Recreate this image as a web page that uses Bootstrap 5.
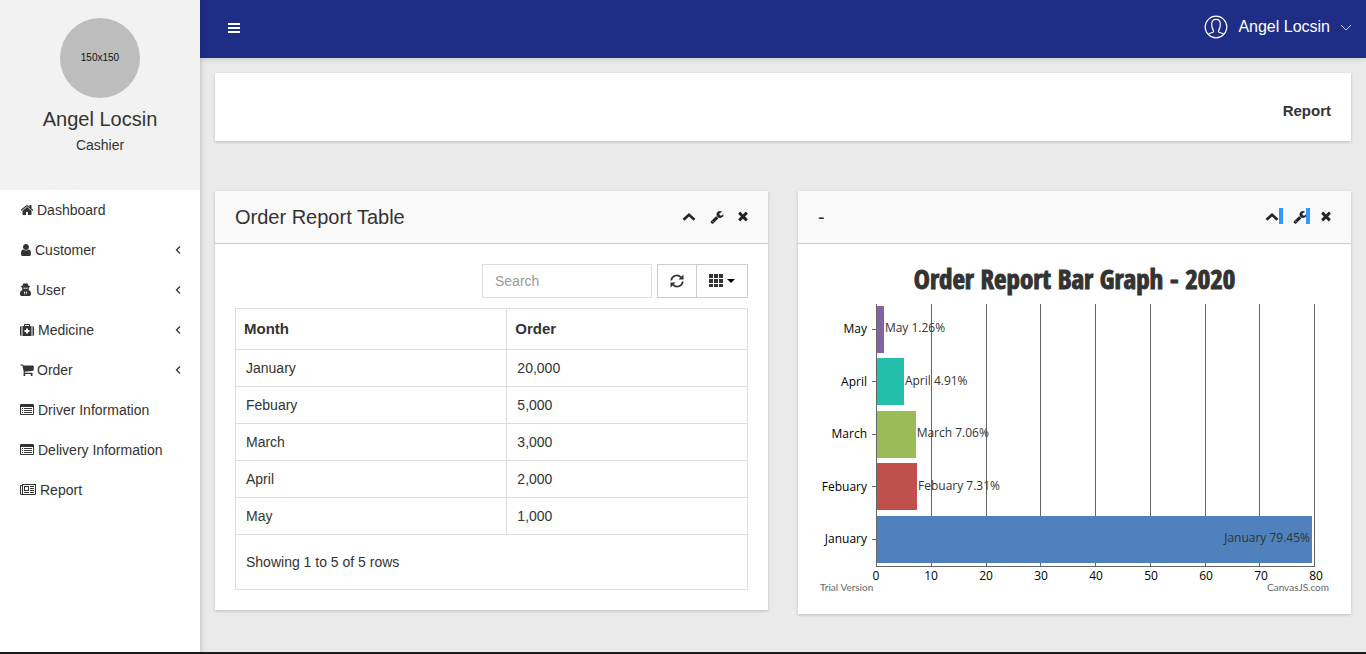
<!DOCTYPE html>
<html lang="en">
<head>
<meta charset="utf-8">
<meta name="viewport" content="width=device-width, initial-scale=1">
<title>Report</title>
<link href="https://cdn.jsdelivr.net/npm/bootstrap@5.3.0/dist/css/bootstrap.min.css" rel="stylesheet">
<style>
body { font-family: "Liberation Sans", Arial, sans-serif; font-size: 14px; line-height: 20px; color: #333; background: #eaeaea; }
a, a:hover { color: #333; text-decoration: none; }
h1, h2, h3 { margin: 0; font-weight: 400; font-size: 20px; line-height: 24px; }
.fa-ico { height: 14px; fill: currentColor; display: block; }
.shell { min-height: 100vh; border-bottom: 2px solid #1c1c1c; }
.side { width: 200px; background: #fff; box-shadow: 0 0 6px rgba(0,0,0,.25); z-index: 1; }
.profile { background: #f2f2f2; padding: 18px 0 35px; }
.avatar { width: 80px; height: 80px; background: #bdbdbd; color: #111; font-size: 10px; margin-bottom: 9px; }
.side-link { height: 40px; padding: 0 19px 0 20px; gap: 3px; }
.topbar { height: 58px; background: #1e2d85; color: #fff; padding: 0 14px 2px 28px; box-shadow: 0 1px 6px rgba(0,0,0,.15); }
.user-btn { font-size: 16px; line-height: 20px; gap: 10px; padding: 0 0 2px; }
.content { padding: 15px 15px 38px; }
.panel { background: #fff; box-shadow: 0 1px 3px rgba(0,0,0,.2); }
.crumbs { height: 68px; padding: 8px 20px 0; font-size: 15px; margin-bottom: 50px; }
.panel-top { height: 53px; background: #f9f9f9; border-bottom: 1px solid #ccc; padding: 0 20px; }
.tools { gap: 14px; }
.marked::after { content: ""; position: absolute; left: 100%; top: -2px; width: 4px; height: 16px; background: #3399ff; }
.marked + .marked::after { left: calc(100% - 1px); }
.panel-pad { padding: 20px; }
.search { width: 170px; height: 34px; border-radius: 0; border-color: #ddd; font-size: 14px; padding: 6px 12px; margin-right: 5px; }
.search::placeholder { color: #999; }
.tool-btn { height: 34px; border: 1px solid #ccc; border-radius: 0; padding: 0 12px; color: #333; background: #fff; }
.orders { --bs-table-bg: #fff; border-color: #ddd; color: #333; margin: 10px 0 0; }
.orders th { font-size: 15px; padding: 10px 8px; }
.orders td { padding: 8px 10px; }
.orders .foot td { padding: 17px 10px; }
.orders th:first-child { width: 53%; }
.chart { padding: 18px 20px 22px; font: 12px/16px "Trebuchet MS", "Open Sans", sans-serif; color: #000; }
.chart-title { font: 700 27px/34px Impact, "Open Sans Condensed", "Liberation Sans Narrow", sans-serif; color: #333; -webkit-text-stroke: 1px #333; }
.plot { margin: 8px 16px 0 58px; height: 263px; border-left: 1px solid #666; border-bottom: 1px solid #666; }
.grid-line { border-right: 1px solid #666; }
.chart-row { height: 52px; padding-bottom: 2px; }
.cat { position: absolute; right: calc(100% + 10px); }
.tick { position: absolute; right: 100%; width: 5px; height: 1px; background: #666; }
.bar { height: 47px; }
.val { color: #333; padding: 0 2px 2px 1px; white-space: nowrap; }
.scale { margin: 1px 0 0 48px; padding-right: 5px; }
.scale span { width: 20px; text-align: center; }
.credit { font: 10px/10px Lato, sans-serif; color: #666; }
.credits { padding: 0 2px; margin-top: -2px; }
</style>
</head>
<body>
<svg class="d-none" aria-hidden="true">
<symbol id="up" viewBox="0 0 14 14"><path d="M1.500 9.800 7 4.800l5.500 5" fill="none" stroke="currentColor" stroke-width="2.700"/></symbol>
<symbol id="wrench" viewBox="0 0 1792 1792"><path d="M448 1472q0-26-19-45t-45-19-45 19-19 45 19 45 45 19 45-19 19-45zm644-420l-682 682q-37 37-90 37-52 0-91-37l-106-108q-38-36-38-90 0-53 38-91l681-681q39 98 114.500 173.500t173.500 114.500zm634-435q0 39-23 106-47 134-164.500 217.500t-258.500 83.500q-185 0-316.500-131.500t-131.500-316.500 131.500-316.500 316.500-131.500q58 0 121.500 16.500t107.500 46.500q16 11 16 28t-16 28l-293 169v224l193 107q5-3 79-48.500t135.500-81 70.500-35.500q15 0 23.500 10t8.500 25z"/></symbol>
<symbol id="times" viewBox="302 128 1188 1792"><path d="M1490 1322q0 40-28 68l-136 136q-28 28-68 28t-68-28l-294-294-294 294q-28 28-68 28t-68-28l-136-136q-28-28-28-68t28-68l294-294-294-294q-28-28-28-68t28-68l136-136q28-28 68-28t68 28l294 294 294-294q28-28 68-28t68 28l136 136q28 28 28 68t-28 68l-294 294 294 294q28 28 28 68z"/></symbol>
<symbol id="left" viewBox="0 0 6 14"><path d="M5 3.500 1.500 7 5 10.500" fill="none" stroke="currentColor" stroke-width="1.300"/></symbol>
<symbol id="list" viewBox="0 0 14 14" preserveAspectRatio="xMinYMid"><path fill-rule="evenodd" d="M1.200 1h11.600q1.200 0 1.200 1.200v8.600q0 1.200-1.200 1.200H1.200Q0 12 0 10.800V2.200Q0 1 1.200 1zM1 4v7h12V4zM2 5h1v1H2zm2 0h8v1H4zM2 7h1v1H2zm2 0h8v1H4zM2 9h1v1H2zm2 0h8v1H4z"/></symbol>
</svg>
<div class="shell d-flex">
  <aside class="side flex-shrink-0 position-relative">
    <div class="profile text-center">
      <div class="avatar rounded-circle mx-auto d-flex align-items-center justify-content-center">150x150</div>
      <h1>Angel Locsin</h1>
      <div class="mt-1">Cashier</div>
    </div>
    <nav>
      <a class="side-link d-flex align-items-center" href="#"><svg class="fa-ico" width="14" viewBox="50 0 1690 1792"><path d="M1472 992v480q0 26-19 45t-45 19h-384v-384h-256v384h-384q-26 0-45-19t-19-45v-480q0-1 .5-3t.5-3l575-474 575 474q1 2 1 6zm223-69l-62 74q-8 9-21 11h-3q-13 0-21-7l-692-577-692 577q-12 8-24 7-13-2-21-11l-62-74q-8-10-7-23.500t11-21.500l719-599q32-26 76-26t76 26l244 204v-195q0-14 9-23t23-9h192q14 0 23 9t9 23v408l219 182q10 8 11 21.500t-7 23.500z"/></svg>Dashboard</a>
      <a class="side-link d-flex align-items-center" href="#"><svg class="fa-ico" width="12" viewBox="200 0 1400 1792"><path d="M1536 1399q0 109-62.500 187t-150.500 78h-854q-88 0-150.500-78t-62.500-187q0-85 8.500-160.500t31.500-152 58.500-131 94-89 134.500-34.500q131 128 313 128t313-128q76 0 134.500 34.500t94 89 58.500 131 31.500 152 8.500 160.500zm-256-887q0 159-112.500 271.500t-271.500 112.500-271.500-112.500-112.500-271.500 112.500-271.500 271.500-112.500 271.500 112.500 112.500 271.500z"/></svg>Customer<svg class="fa-ico ms-auto" width="6"><use href="#left"/></svg></a>
      <a class="side-link d-flex align-items-center" href="#"><svg class="fa-ico" width="13" viewBox="0 0 13 14" preserveAspectRatio="xMinYMid"><path fill-rule="evenodd" d="M2.500 2.700 3.200.8Q3.700 0 4.700.4q.8.300 1.600 0Q7.300 0 7.800.8l.7 1.900q1.700.2 1.700.8 0 .5-1.300.9.200 1.600-.4 2.500Q11 7.300 11 11.300q0 1.700-1.700 1.700H1.700Q0 13 0 11.300 0 7.300 2.500 6.900 1.900 6 2.100 4.400.8 4 .8 3.500q0-.6 1.700-.8zM3.200 4.800l.5 1h1.300l.5-.8.5.8h1.300l.5-1zM3.800 8l.9 4 .5-2.800zm3.400 0L5.800 9.200l.5 2.800z"/></svg>User<svg class="fa-ico ms-auto" width="6"><use href="#left"/></svg></a>
      <a class="side-link d-flex align-items-center" href="#"><svg class="fa-ico" width="15" viewBox="0 0 14 14" preserveAspectRatio="xMinYMid"><path fill-rule="evenodd" d="M1.500 3v10Q0 13 0 11.500v-7Q0 3 1.500 3zm11 0Q14 3 14 4.500v7q0 1.500-1.500 1.500zM2.500 3H4V1.800Q4 1 4.800 1h4.400q.8 0 .8.800V3h1.500v10h-9zM5 2v1h4V2zM6 5.500V7H4.500v2H6v1.500h2V9h1.500V7H8V5.500z"/></svg>Medicine<svg class="fa-ico ms-auto" width="6"><use href="#left"/></svg></a>
      <a class="side-link d-flex align-items-center" href="#"><svg class="fa-ico" width="14" viewBox="32 64 1728 1728"><path d="M704 1536q0 52-38 90t-90 38-90-38-38-90 38-90 90-38 90 38 38 90zm896 0q0 52-38 90t-90 38-90-38-38-90 38-90 90-38 90 38 38 90zm128-1088v512q0 24-16.500 42.500t-40.500 21.500l-1044 122q13 60 13 70 0 16-24 64h920q26 0 45 19t19 45-19 45-45 19h-1024q-26 0-45-19t-19-45q0-11 8-31.500t16-36 21.500-40 15.500-29.500l-177-823h-204q-26 0-45-19t-19-45 19-45 45-19h256q16 0 28.500 6.500t19.500 15.500 13 24.500 8 26 5.500 29.500 4.500 26h1201q26 0 45 19t19 45z"/></svg>Order<svg class="fa-ico ms-auto" width="6"><use href="#left"/></svg></a>
      <a class="side-link d-flex align-items-center" href="#"><svg class="fa-ico" width="15"><use href="#list"/></svg>Driver Information</a>
      <a class="side-link d-flex align-items-center" href="#"><svg class="fa-ico" width="15"><use href="#list"/></svg>Delivery Information</a>
      <a class="side-link d-flex align-items-center" href="#"><svg class="fa-ico" width="17" viewBox="0 0 16 14" preserveAspectRatio="xMinYMid"><path fill-rule="evenodd" d="M2 1h14v9.800q0 1.200-1.200 1.200H1.500Q0 12 0 10.500V2h2zM3 2v9h11.500q.5 0 .5-.5V2zM1 3v7.500q0 .5.500.5T2 10.500V3zM4 3h5v5H4zm1 1v3h3V4zm5-1h4v1h-4zm0 2h4v1h-4zM4 9h5v1H4zm6-2h4v1h-4zm0 2h4v1h-4z"/></svg>Report</a>
    </nav>
  </aside>
  <div class="flex-grow-1">
    <header class="topbar d-flex align-items-center justify-content-between">
      <button class="btn p-0 border-0 text-white" aria-label="Toggle menu"><svg class="fa-ico" width="12" viewBox="0 0 12 14"><path d="M0 2h12v2H0zm0 4h12v2H0zm0 4h12v2H0z"/></svg></button>
      <button class="user-btn btn border-0 text-white d-flex align-items-center">
        <svg width="24" height="24" viewBox="0 0 24 24" fill="none" stroke="#fff" stroke-width="1.200"><circle cx="12" cy="12" r="10.800"/><path d="M4 19.200q3-1.200 5-1.900.900-.4.400-1.700Q7.700 13 7.700 9q0-4.600 4.300-4.600T16.300 9q0 4-1.700 6.600-.5 1.300.4 1.700 2 .7 5 1.900"/></svg>
        <span>Angel Locsin</span>
        <svg width="12" height="12" viewBox="0 0 12 12" fill="none" stroke="#cdd3f2"><path d="M1 4l5 5 5-5"/></svg>
      </button>
    </header>
    <main class="content">
      <div class="panel crumbs d-flex align-items-center justify-content-end fw-bold">Report</div>
      <div class="row align-items-start" style="--bs-gutter-x:30px">
        <section class="col-6">
          <div class="panel">
            <div class="panel-top d-flex align-items-center justify-content-between">
              <h2>Order Report Table</h2>
              <div class="tools d-flex">
                <button class="btn p-0 border-0" aria-label="Collapse"><svg class="fa-ico" width="14"><use href="#up"/></svg></button>
                <button class="btn p-0 border-0" aria-label="Settings"><svg class="fa-ico" width="14"><use href="#wrench"/></svg></button>
                <button class="btn p-0 border-0" aria-label="Close"><svg class="fa-ico" width="10"><use href="#times"/></svg></button>
              </div>
            </div>
            <div class="panel-pad">
              <div class="d-flex justify-content-end">
                <input class="search form-control" type="search" placeholder="Search" aria-label="Search">
                <div class="btn-group">
                  <button class="tool-btn btn" aria-label="Refresh"><svg class="fa-ico" width="14" viewBox="0 0 14 14"><path d="M1.200 6.500A5.600 5.600 0 0 1 11 3.400M12.800 7.500A5.600 5.600 0 0 1 3 10.600" fill="none" stroke="currentColor" stroke-width="1.700"/><path d="M13.500.5v5h-5zM.5 13.500v-5h5z"/></svg></button>
                  <button class="tool-btn btn d-flex align-items-center" aria-label="Columns"><svg class="fa-ico" width="14" viewBox="0 0 14 14"><path d="M0 0h4v4H0zm5 0h4v4H5zm5 0h4v4h-4zM0 5h4v4H0zm5 0h4v4H5zm5 0h4v4h-4zM0 10h4v3H0zm5 0h4v3H5zm5 0h4v3h-4z"/></svg><svg class="ms-1" width="8" height="4" viewBox="0 0 8 4"><path d="M0 0h8L4 4z"/></svg></button>
                </div>
              </div>
              <table class="orders table table-bordered">
                <thead><tr><th>Month</th><th>Order</th></tr></thead>
                <tbody>
                  <tr><td>January</td><td>20,000</td></tr>
                  <tr><td>Febuary</td><td>5,000</td></tr>
                  <tr><td>March</td><td>3,000</td></tr>
                  <tr><td>April</td><td>2,000</td></tr>
                  <tr><td>May</td><td>1,000</td></tr>
                  <tr class="foot"><td colspan="2">Showing 1 to 5 of 5 rows</td></tr>
                </tbody>
              </table>
            </div>
          </div>
        </section>
        <section class="col-6">
          <div class="panel">
            <div class="panel-top d-flex align-items-center justify-content-between">
              <h2>-</h2>
              <div class="tools d-flex">
                <button class="marked position-relative btn p-0 border-0" aria-label="Collapse"><svg class="fa-ico" width="14"><use href="#up"/></svg></button>
                <button class="marked position-relative btn p-0 border-0" aria-label="Settings"><svg class="fa-ico" width="14"><use href="#wrench"/></svg></button>
                <button class="btn p-0 border-0" aria-label="Close"><svg class="fa-ico" width="10"><use href="#times"/></svg></button>
              </div>
            </div>
            <div class="chart">
              <h3 class="chart-title text-center">Order Report Bar Graph - 2020</h3>
              <div class="plot position-relative">
                <div class="position-absolute top-0 start-0 w-100 h-100 d-flex">
                  <div class="grid-line col"></div><div class="grid-line col"></div><div class="grid-line col"></div><div class="grid-line col"></div><div class="grid-line col"></div><div class="grid-line col"></div><div class="grid-line col"></div><div class="grid-line col"></div>
                </div>
                <div class="position-relative h-100 d-flex flex-column justify-content-between">
                  <div class="chart-row d-flex align-items-center"><span class="cat">May</span><i class="tick"></i><div class="bar" style="width:1.575%;background:#8064a1"></div><span class="val">May 1.26%</span></div>
                  <div class="chart-row d-flex align-items-center"><span class="cat">April</span><i class="tick"></i><div class="bar" style="width:6.137%;background:#23bfaa"></div><span class="val">April 4.91%</span></div>
                  <div class="chart-row d-flex align-items-center"><span class="cat">March</span><i class="tick"></i><div class="bar" style="width:8.825%;background:#9bbb58"></div><span class="val">March 7.06%</span></div>
                  <div class="chart-row d-flex align-items-center"><span class="cat">Febuary</span><i class="tick"></i><div class="bar" style="width:9.137%;background:#c0504e"></div><span class="val">Febuary 7.31%</span></div>
                  <div class="chart-row d-flex align-items-center"><span class="cat">January</span><i class="tick"></i><div class="bar d-flex align-items-center justify-content-end" style="width:99.312%;background:#4f81bc"><span class="val">January 79.45%</span></div></div>
                </div>
              </div>
              <div class="scale d-flex justify-content-between"><span>0</span><span>10</span><span>20</span><span>30</span><span>40</span><span>50</span><span>60</span><span>70</span><span>80</span></div>
              <div class="credits d-flex justify-content-between"><span class="credit">Trial Version</span><a class="credit" href="#">CanvasJS.com</a></div>
            </div>
          </div>
        </section>
      </div>
    </main>
  </div>
</div>
<script src="https://cdn.jsdelivr.net/npm/bootstrap@5.3.0/dist/js/bootstrap.bundle.min.js"></script>
</body>
</html>
